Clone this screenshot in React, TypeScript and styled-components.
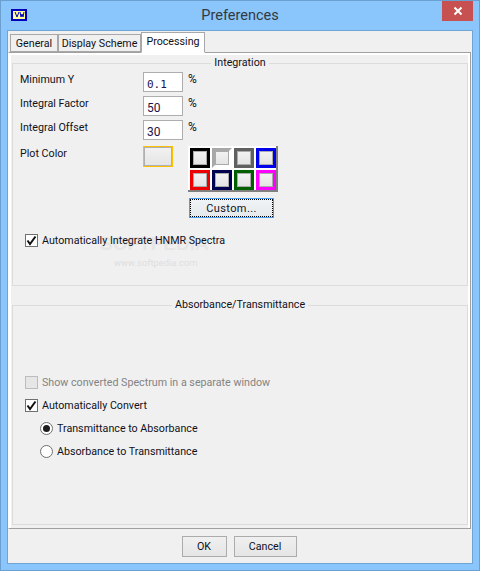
import styled, { createGlobalStyle } from "styled-components";

const GlobalStyle = createGlobalStyle`
  html, body {
    margin: 0;
    padding: 0;
    background: #8ac5fb;
  }
  * {
    box-sizing: border-box;
  }
`;

const Window = styled.div`
  display: flex;
  flex-direction: column;
  width: 480px;
  height: 571px;
  padding: 0 6px 6px;
  background: #8ac5fb;
  border: 1px solid #6b9fd0;
  font-family: Roboto, sans-serif;
  font-size: 10.7px;
  color: #101020;
`;

const TitleBar = styled.div`
  display: flex;
  align-items: center;
  justify-content: center;
  position: relative;
  flex-shrink: 0;
  height: 29px;
`;

const Title = styled.span`
  font-family: Roboto, sans-serif;
  font-size: 14.5px;
  color: #333a42;
`;

const AppIcon = styled.svg`
  position: absolute;
  left: 4px;
  top: 8px;
  width: 16px;
  height: 12px;
`;

const CloseButton = styled.div`
  position: absolute;
  right: 0;
  top: 0;
  display: flex;
  align-items: center;
  justify-content: center;
  width: 31px;
  height: 20px;
  background: #c75050;
`;

const Client = styled.div`
  display: flex;
  flex-direction: column;
  flex: 1;
  background: #f0f0f0;
  border: 1px solid #6fa5d6;
`;

const TabStrip = styled.div`
  display: flex;
  align-items: flex-end;
  flex-shrink: 0;
  height: 21px;
  padding-left: 2px;
  position: relative;
  z-index: 1;
`;

const Tab = styled.div<{ $active?: boolean; $width: number }>`
  display: flex;
  align-items: center;
  justify-content: center;
  flex-shrink: 0;
  white-space: nowrap;
  height: ${(p) => (p.$active ? "21px" : "18px")};
  padding-bottom: ${(p) => (p.$active ? "3px" : "0")};
  width: ${(p) => p.$width}px;
  background: ${(p) => (p.$active ? "#ffffff" : "#f0f0f0")};
  border: 1px solid #a8a8a8;
  border-bottom: 1px solid ${(p) => (p.$active ? "#ffffff" : "#a8a8a8")};
  margin-bottom: ${(p) => (p.$active ? "-1px" : "0")};
`;

const TabPane = styled.div`
  display: flex;
  flex-direction: column;
  gap: 12px;
  flex-shrink: 0;
  height: 477px;
  margin-right: 1px;
  padding: 3px 2px 3px 3px;
  background: #f0f0f0;
  border: 1px solid #a0a0a0;
  border-left-color: #ffffff;
  box-shadow: inset 0 2px 0 #ffffff, inset 2px 0 0 #ffffff, inset -2px 0 0 #ffffff;
`;

const Group = styled.fieldset<{ $height: number }>`
  display: flex;
  flex-direction: column;
  position: relative;
  height: ${(p) => p.$height}px;
  flex-shrink: 0;
  margin: 0;
  padding: 0;
  min-width: 0;
  border: 1px solid #dcdcdc;
`;

const Legend = styled.legend`
  margin: 0 auto;
  padding: 0 3px;
  line-height: 14px;
`;

const FieldRows = styled.div`
  display: flex;
  flex-direction: column;
  gap: 4px;
  padding-left: 7px;
  margin-top: 2px;
`;

const FieldRow = styled.div`
  display: flex;
  align-items: flex-start;
  height: 20px;
`;

const FieldLabel = styled.span`
  width: 123px;
  line-height: 15px;
`;

const NumberInput = styled.div<{ $mono?: boolean }>`
  display: flex;
  align-items: center;
  width: 40px;
  height: 20px;
  padding: 4px 0 0 3px;
  background: #ffffff;
  border: 1px solid #adadad;
  color: #22124a;
  font-family: ${(p) => (p.$mono ? '"DejaVu Sans Mono", monospace' : "Roboto, sans-serif")};
  font-size: ${(p) => (p.$mono ? "11px" : "12px")};
`;

const Percent = styled.span`
  margin-left: 5px;
  line-height: 15px;
  font-size: 12px;
`;

const ColorArea = styled.div`
  display: flex;
  padding: 6px 0 0 7px;
`;

const CurrentColor = styled.div`
  width: 30px;
  height: 21px;
  margin-right: 15px;
  border: 1px solid #ffc000;
  background: linear-gradient(#f2f2f2, #e4e4e4);
  box-shadow: inset 0 0 0 1px #b0b0b0;
`;

const PaletteColumn = styled.div`
  display: flex;
  flex-direction: column;
  align-items: flex-start;
`;

const Palette = styled.div`
  display: grid;
  grid-template-columns: repeat(4, 20px);
  grid-auto-rows: 20px;
  gap: 2px;
  width: 90px;
  height: 46px;
  padding: 2px 0 0 2px;
  background: #ffffff;
  border-right: 2px solid #808080;
  border-bottom: 2px solid #808080;
`;

const Swatch = styled.div<{ $color: string; $bevel?: boolean }>`
  display: flex;
  align-items: center;
  justify-content: center;
  border: 3px solid ${(p) => p.$color};
  border-top-color: ${(p) => (p.$bevel ? "#a8a8a8" : p.$color)};
  border-left-color: ${(p) => (p.$bevel ? "#a8a8a8" : p.$color)};
`;

const SwatchFace = styled.div`
  flex-shrink: 0;
  width: 14px;
  height: 14px;
  background: linear-gradient(#f2f2f2, #e4e4e4);
  border: 1px solid #aaaaaa;
`;

const CustomButton = styled.div`
  display: flex;
  align-items: center;
  justify-content: center;
  width: 85px;
  height: 20px;
  margin: 6px 0 0 1px;
  background: linear-gradient(#f1f4f7, #e6e9ec);
  border: 1px solid #4a9ff0;
  outline: 1px dotted #000000;
  outline-offset: -2px;
  font-size: 11px;
  letter-spacing: 0.4px;
`;

const CheckRow = styled.div<{ $disabled?: boolean }>`
  display: flex;
  align-items: center;
  gap: 4px;
  height: 16px;
  position: relative;
  color: ${(p) => (p.$disabled ? "#838383" : "inherit")};
`;

const CheckBox = styled.div<{ $disabled?: boolean }>`
  display: flex;
  align-items: center;
  justify-content: center;
  width: 13px;
  height: 13px;
  flex-shrink: 0;
  background: ${(p) => (p.$disabled ? "#e6e6e6" : "#ffffff")};
  border: 1px solid ${(p) => (p.$disabled ? "#bcbcbc" : "#707070")};
`;

const IntegrateCheck = styled.div`
  padding: 14px 0 0 12px;
`;

const ConvertOptions = styled.div`
  display: flex;
  flex-direction: column;
  gap: 7px;
  padding: 62px 0 0 12px;
`;

const RadioList = styled.div`
  display: flex;
  flex-direction: column;
  gap: 7px;
  padding-left: 15px;
`;

const RadioRow = styled.div`
  display: flex;
  align-items: center;
  gap: 4px;
  height: 16px;
`;

const RadioCircle = styled.div<{ $on?: boolean }>`
  display: flex;
  align-items: center;
  justify-content: center;
  width: 13px;
  height: 13px;
  border-radius: 50%;
  background: #ffffff;
  border: 1px solid #707070;
  &::after {
    content: "";
    display: ${(p) => (p.$on ? "block" : "none")};
    width: 7px;
    height: 7px;
    border-radius: 50%;
    background: #1c1c1c;
  }
`;

const WatermarkLogo = styled.div`
  position: absolute;
  left: 87px;
  top: 163px;
  color: #e6e6e6;
  font-family: "Liberation Sans", sans-serif;
  font-size: 19px;
  font-weight: 700;
  line-height: 22px;
  pointer-events: none;
`;

const WatermarkUrl = styled.div`
  position: absolute;
  left: 101px;
  top: 187px;
  color: #dedede;
  font-size: 9.4px;
  pointer-events: none;
`;

const Footer = styled.div`
  display: flex;
  justify-content: center;
  gap: 7px;
  padding: 7px 2px 0 0;
`;

const FooterButton = styled.div<{ $width: number }>`
  display: flex;
  align-items: center;
  justify-content: center;
  width: ${(p) => p.$width}px;
  height: 21px;
  background: linear-gradient(#f0f0f0, #e5e5e5);
  border: 1px solid #acacac;
`;

const palette = [
  { color: "#000000" },
  { color: "#ffffff", bevel: true },
  { color: "#606060" },
  { color: "#0000ee" },
  { color: "#ee0000" },
  { color: "#000050" },
  { color: "#006000" },
  { color: "#ff00ff" },
];

const fields = [
  { label: "Minimum Y", value: "0.1", mono: true },
  { label: "Integral Factor", value: "50" },
  { label: "Integral Offset", value: "30" },
];

function CheckMark() {
  return (
    <svg width="11" height="11" viewBox="0 0 11 11">
      <path d="M1.5 5.5 L4 9 L9.5 1.5" fill="none" stroke="#111" strokeWidth="2" />
    </svg>
  );
}

function App() {
  return (
    <>
      <GlobalStyle />
      <Window>
        <TitleBar>
          <AppIcon viewBox="0 0 16 12">
            <rect x="1" y="1" width="14" height="10" fill="#ffff99" stroke="#0000c0" strokeWidth="2" />
            <path d="M4 3 L6 8 M8 3 L6 8 M9 3 L10 8 L11 5 L12 8 L13 3" fill="none" stroke="#0000c0" />
          </AppIcon>
          <Title>Preferences</Title>
          <CloseButton>
            <svg width="10" height="10" viewBox="0 0 10 10">
              <path d="M1.5 1.5 L8.5 8.5 M8.5 1.5 L1.5 8.5" stroke="#fff" strokeWidth="2" />
            </svg>
          </CloseButton>
        </TitleBar>
        <Client>
          <TabStrip>
            <Tab $width={48}>General</Tab>
            <Tab $width={83}>Display Scheme</Tab>
            <Tab $width={64} $active>
              Processing
            </Tab>
          </TabStrip>
          <TabPane>
            <Group $height={230}>
              <Legend>Integration</Legend>
              <WatermarkLogo>SOFTPEDIA</WatermarkLogo>
              <WatermarkUrl>www.softpedia.com</WatermarkUrl>
              <FieldRows>
                {fields.map((field) => (
                  <FieldRow key={field.label}>
                    <FieldLabel>{field.label}</FieldLabel>
                    <NumberInput $mono={field.mono}>{field.value}</NumberInput>
                    <Percent>%</Percent>
                  </FieldRow>
                ))}
              </FieldRows>
              <ColorArea>
                <FieldLabel>Plot Color</FieldLabel>
                <CurrentColor />
                <PaletteColumn>
                  <Palette>
                    {palette.map((item) => (
                      <Swatch key={item.color} $color={item.color} $bevel={item.bevel}>
                        <SwatchFace />
                      </Swatch>
                    ))}
                  </Palette>
                  <CustomButton>Custom...</CustomButton>
                </PaletteColumn>
              </ColorArea>
              <IntegrateCheck>
                <CheckRow>
                  <CheckBox>
                    <CheckMark />
                  </CheckBox>
                  Automatically Integrate HNMR Spectra
                </CheckRow>
              </IntegrateCheck>
            </Group>
            <Group $height={227}>
              <Legend>Absorbance/Transmittance</Legend>
              <ConvertOptions>
                <CheckRow $disabled>
                  <CheckBox $disabled />
                  Show converted Spectrum in a separate window
                </CheckRow>
                <CheckRow>
                  <CheckBox>
                    <CheckMark />
                  </CheckBox>
                  Automatically Convert
                </CheckRow>
                <RadioList>
                  <RadioRow>
                    <RadioCircle $on />
                    Transmittance to Absorbance
                  </RadioRow>
                  <RadioRow>
                    <RadioCircle />
                    Absorbance to Transmittance
                  </RadioRow>
                </RadioList>
              </ConvertOptions>
            </Group>
          </TabPane>
          <Footer>
            <FooterButton $width={45}>OK</FooterButton>
            <FooterButton $width={63}>Cancel</FooterButton>
          </Footer>
        </Client>
      </Window>
    </>
  );
}

export default App;
